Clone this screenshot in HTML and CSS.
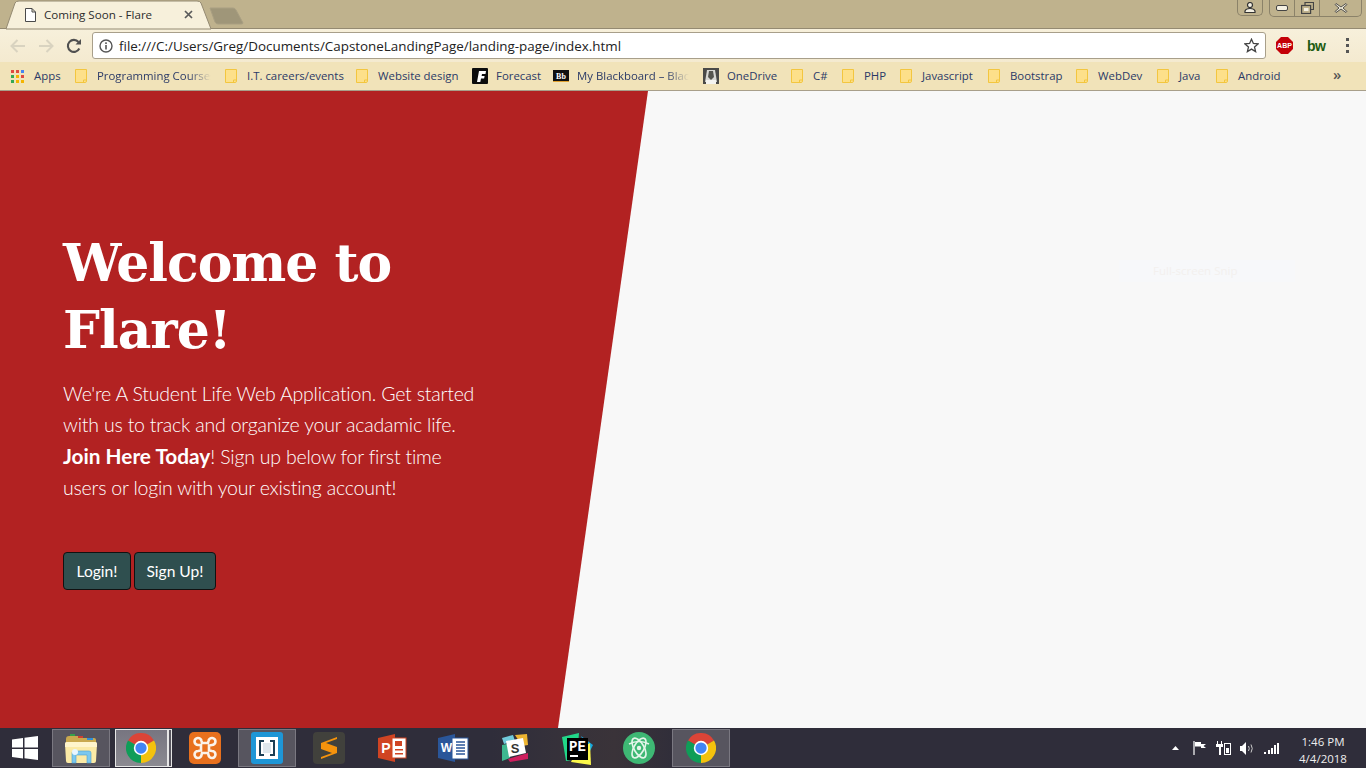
FILE: index.html
```html
<!DOCTYPE html>
<html lang="en">
<head>
<meta charset="utf-8">
<title>Coming Soon - Flare</title>
<link rel="stylesheet" href="styles.css">
</head>
<body>
<svg class="defs" width="0" height="0" aria-hidden="true">
  <defs>
    <symbol id="folder" viewBox="0 0 12 14"><path d="M.5.5h11v11.600a1.400 1.400 0 0 1-1.400 1.400H.5z" fill="#fde08a" stroke="#f3c63f"/><path d="M8.500 13.500v-2.500h3" fill="none" stroke="#f3c63f"/></symbol>
    <symbol id="chrome" viewBox="0 0 48 48">
      <path d="M24 24 3.200 12A24 24 0 0 1 44.800 12z" fill="#db4437"/>
      <path d="M24 24 44.800 12A24 24 0 0 1 24 48z" fill="#f4c20d"/>
      <path d="M24 24 24 48A24 24 0 0 1 3.200 12z" fill="#0f9d58"/>
      <circle cx="24" cy="24" r="11.500" fill="#fff"/><circle cx="24" cy="24" r="9" fill="#4285f4"/>
    </symbol>
  </defs>
</svg>
<header class="browser">
  <div class="tabstrip">
    <div class="tab">
      <svg class="tab-shape" width="206" height="29" viewBox="0 0 206 29"><path d="M6 29 15 3Q16 1 19 1H197Q200 1 201 3L211 29z" fill="#f7f0db" stroke="#948a72"/></svg>
      <svg class="tab-page" width="11" height="14" viewBox="0 0 11 14"><path d="M.5.500h6.500l3.500 3.500v9.500h-10zM7 .5v3.500h3.500" fill="#fff" stroke="#4a4a4a"/></svg>
      <span class="tab-title">Coming Soon - Flare</span>
      <svg class="tab-close" width="9" height="9" viewBox="0 0 9 9"><path d="M1 1l7 7M8 1l-7 7" stroke="#5a5a5a" stroke-width="1.700"/></svg>
    </div>
    <svg class="new-tab" width="36" height="18" viewBox="0 0 36 18"><path d="M1 1H24Q26 1 27 3L34 16Q34 17 32 17H9Q7 17 6 15z" fill="#9f9679" stroke="#a99f82"/></svg>
    <div class="win-controls">
      <div class="win-btn win-user"><svg width="12" height="11" viewBox="0 0 12 11"><circle cx="6" cy="3" r="2.500" fill="#f4f0e2" stroke="#333" stroke-width="1.200"/><path d="M1 10.500V9q1-2.500 5-2.500T11 9v1.500z" fill="#f4f0e2" stroke="#333" stroke-width="1.200"/></svg></div>
      <div class="win-group">
        <div class="win-btn win-min"><svg width="12" height="6" viewBox="0 0 12 6"><rect x=".5" y=".5" width="11" height="5" rx="1.500" fill="#f4f0e2" stroke="#444"/></svg></div>
        <div class="win-btn win-max"><svg width="13" height="12" viewBox="0 0 13 12"><path d="M4 3V.5h8.500v7H9.500" fill="none" stroke="#444" stroke-width="1.200"/><rect x=".6" y="3.500" width="9" height="8" fill="none" stroke="#444" stroke-width="1.200"/><rect x="3" y="6" width="4.500" height="3" fill="#f4f0e2"/></svg></div>
        <div class="win-btn win-close"><svg width="14" height="10" viewBox="0 0 14 10"><path d="M2 .5 7 4l5-3.500 1 1L9 5l4 3.500-1 1L7 6 2 9.500l-1-1L5 5 1 1.500z" fill="#efe9d6" stroke="#444" stroke-width=".9"/></svg></div>
      </div>
    </div>
  </div>
  <div class="toolbar">
    <svg class="tool-icon" width="16" height="14" viewBox="0 0 16 14"><path d="M15 7H2M7.500 1 1.500 7l6 6" fill="none" stroke="#d9d3c0" stroke-width="2"/></svg>
    <svg class="tool-icon" width="16" height="14" viewBox="0 0 16 14"><path d="M1 7h13M8.500 1l6 6-6 6" fill="none" stroke="#d9d3c0" stroke-width="2"/></svg>
    <svg class="tool-icon" width="16" height="16" viewBox="0 0 16 16"><path d="M13.300 10.500A6 6 0 1 1 12.500 4" fill="none" stroke="#505050" stroke-width="2.100"/><path d="M9.500 6.500H15V1z" fill="#505050"/></svg>
    <div class="omnibox">
      <svg width="14" height="14" viewBox="0 0 14 14"><circle cx="7" cy="7" r="6" fill="none" stroke="#555" stroke-width="1.400"/><rect x="6.200" y="6" width="1.600" height="4.500" fill="#555"/><rect x="6.200" y="3.300" width="1.600" height="1.700" fill="#555"/></svg>
      <span class="url">file:///C:/Users/Greg/Documents/CapstoneLandingPage/landing-page/index.html</span>
      <svg class="star" width="15" height="15" viewBox="0 0 15 15"><path d="M7.500 1.200l1.900 4.300 4.600.4-3.500 3.100 1.100 4.600-4.100-2.500-4.100 2.500 1.100-4.600L1 5.900l4.600-.4z" fill="none" stroke="#444" stroke-width="1.300"/></svg>
    </div>
    <div class="ext ext-abp"><svg width="17" height="17" viewBox="0 0 17 17"><path d="M5 0h7l5 5v7l-5 5H5l-5-5V5z" fill="#c40008"/><text x="8.500" y="11.300" class="abp-text">ABP</text></svg></div>
    <div class="ext ext-bw">bw</div>
    <div class="kebab"><i></i><i></i><i></i></div>
  </div>
  <nav class="bookmarks">
    <span class="bm"><svg class="bm-ico" width="13" height="13" viewBox="0 0 13 13"><g fill="#e04a3f"><rect width="3" height="3"/><rect x="5" width="3" height="3"/></g><rect x="10" width="3" height="3" fill="#4285f4"/><rect y="5" width="3" height="3" fill="#34a853"/><rect x="5" y="5" width="3" height="3" fill="#f4b400"/><rect x="10" y="5" width="3" height="3" fill="#e04a3f"/><rect y="10" width="3" height="3" fill="#34a853"/><rect x="5" y="10" width="3" height="3" fill="#f4b400"/><rect x="10" y="10" width="3" height="3" fill="#f4b400"/></svg><span class="bm-label w-ap">Apps</span></span>
    <span class="bm"><svg class="bm-ico folder"><use href="#folder"/></svg><span class="bm-label faded w-prog">Programming Courses</span></span>
    <span class="bm"><svg class="bm-ico folder"><use href="#folder"/></svg><span class="bm-label w-it">I.T. careers/events</span></span>
    <span class="bm"><svg class="bm-ico folder"><use href="#folder"/></svg><span class="bm-label w-web">Website design</span></span>
    <span class="bm bm-site"><svg class="bm-ico" width="16" height="16" viewBox="0 0 16 16"><rect width="16" height="16" rx="1" fill="#0c0c0c"/><path d="M5 14 7 3h7l-.5 3H10l-.4 2h3l-.5 2.500H9L8.300 14z" fill="#fff"/></svg><span class="bm-label w-fc">Forecast</span></span>
    <span class="bm bm-site"><svg class="bm-ico" width="16" height="12" viewBox="0 0 16 12"><rect width="16" height="12" fill="#111"/><rect y="11" width="16" height="1" fill="#e0a030"/><text x="8" y="9" class="bb-text">Bb</text></svg><span class="bm-label faded w-bb">My Blackboard – Blackboard</span></span>
    <span class="bm bm-site"><svg class="bm-ico" width="16" height="16" viewBox="0 0 16 16"><rect width="16" height="16" fill="#4a4a48"/><path d="M4 2h8l2 12H2z" fill="#d8d8d4"/><path d="M6 3h4l1 6-3 3-3-3z" fill="#55554f"/><rect x="3" y="12" width="10" height="4" fill="#f4f4f0"/></svg><span class="bm-label w-od">OneDrive</span></span>
    <span class="bm"><svg class="bm-ico folder"><use href="#folder"/></svg><span class="bm-label w-c">C#</span></span>
    <span class="bm"><svg class="bm-ico folder"><use href="#folder"/></svg><span class="bm-label w-php">PHP</span></span>
    <span class="bm"><svg class="bm-ico folder"><use href="#folder"/></svg><span class="bm-label w-js">Javascript</span></span>
    <span class="bm"><svg class="bm-ico folder"><use href="#folder"/></svg><span class="bm-label w-bs">Bootstrap</span></span>
    <span class="bm"><svg class="bm-ico folder"><use href="#folder"/></svg><span class="bm-label w-wd">WebDev</span></span>
    <span class="bm"><svg class="bm-ico folder"><use href="#folder"/></svg><span class="bm-label w-ja">Java</span></span>
    <span class="bm"><svg class="bm-ico folder"><use href="#folder"/></svg><span class="bm-label w-an">Android</span></span>
    <span class="bm-more">»</span>
  </nav>
</header>
<main class="page">
  <section class="hero">
    <div class="hero-inner">
      <h1>Welcome to Flare!</h1>
      <p>We're A Student Life Web Application. Get started with us to track and organize your acadamic life. <strong>Join Here Today</strong>! Sign up below for first time users or login with your existing account!</p>
      <div class="actions">
        <button class="btn btn-login">Login!</button>
        <button class="btn btn-signup">Sign Up!</button>
      </div>
    </div>
  </section>
  <div class="ghost-snip"><span>Full-screen Snip</span></div>
</main>
<footer class="taskbar">
  <svg class="start" width="26" height="24" viewBox="0 0 26 24"><path d="M0 3.500 11 2v9.500H0zM12.500 1.800 26 0v11.500H12.500zM0 13h11v9.500L0 21zM12.500 13H26v11l-13.500-1.800z" fill="#fff"/></svg>
  <div class="slot"><div class="tb-box">
    <svg width="34" height="32" viewBox="0 0 34 32"><path d="M2 7q0-3 3-3h9l2 2h14q2 0 2 2v6H2z" fill="#c9a94f"/><rect x="6" y="2" width="5" height="2" fill="#35a04a"/><rect x="14" y="4" width="5" height="2" fill="#d04030"/><rect x="23" y="6" width="6" height="2" fill="#2e8fd8"/><path d="M1 12q0-2 2-2h28q2 0 2 2l-1 17q0 2-2 2H4q-2 0-2-2z" fill="#fbeaa6"/><path d="M1 12q0-2 2-2h28q2 0 2 2v3H1z" fill="#fff5cc"/><path d="M8 31V21q0-2 2-2h15q2 0 2 2v10h-4v-8H12v8z" fill="#7cc8ee" stroke="#4a9fd0" stroke-width=".6"/><circle cx="11" cy="20" r="3" fill="#e8f6ff"/></svg>
  </div></div>
  <div class="slot slot-active"><div class="tb-box tb-box-active"><svg width="30" height="30"><use href="#chrome"/></svg></div><i class="sliver"></i></div>
  <div class="slot"><svg width="32" height="32" viewBox="0 0 32 32"><rect width="32" height="32" rx="5" fill="#e8701d"/><path d="M12 13 9 13a3.500 3.500 0 1 1 3.500-4l.5 2h6l.5-2A3.500 3.500 0 1 1 23 13l-3 .5v5l3 .5a3.500 3.500 0 1 1-3.500 4l-.5-2h-6l-.5 2A3.500 3.500 0 1 1 9 19l3-.5z" fill="none" stroke="#fbf3ea" stroke-width="2.600"/></svg></div>
  <div class="slot"><div class="tb-box"><svg width="32" height="32" viewBox="0 0 32 32"><rect width="32" height="32" rx="3" fill="#1e96d6"/><path d="M5 5h22v22H5z" fill="#fff"/><path d="M8 8h5v2h-3v12h3v2H8zM24 8h-5v2h3v12h-3v2h5z" fill="#1c3f55"/><rect x="12" y="11" width="8" height="10" fill="#dfe7ec"/></svg></div></div>
  <div class="slot"><svg width="32" height="32" viewBox="0 0 32 32"><rect width="32" height="32" rx="4" fill="#41413c"/><path d="M24 5 8 11v6l11 4-11 4v2l16-6v-6l-11-4 11-4z" fill="#f5930c"/></svg></div>
  <div class="slot"><svg width="32" height="32" viewBox="0 0 32 32"><path d="M3 6 20 2v28L3 26z" fill="#d04423"/><rect x="17" y="6" width="14" height="20" fill="#fff" stroke="#d04423"/><rect x="20" y="9" width="7" height="5" fill="#d04423"/><rect x="20" y="17" width="8" height="1.500" fill="#d04423"/><rect x="20" y="21" width="8" height="1.500" fill="#d04423"/><text x="11" y="21" class="ms-text">P</text></svg></div>
  <div class="slot"><svg width="32" height="32" viewBox="0 0 32 32"><path d="M1 6 18 2v28L1 26z" fill="#2a5699"/><rect x="15" y="6" width="16" height="21" fill="#fff" stroke="#2a5699"/><path d="M19 10h9M19 13h9M19 16h9M19 19h9M19 22h9" stroke="#2a5699" stroke-width="1.500"/><text x="9.500" y="20" class="ms-text ms-w">W</text></svg></div>
  <div class="slot"><svg width="30" height="30" viewBox="0 0 30 30"><path d="M2 5 13 2l2 6-11 3z" fill="#70cadb"/><path d="M15 2 27 1l1 11-6 1z" fill="#edb431"/><path d="M2 12l5-1 3 14-8 3z" fill="#3eb890"/><path d="M8 26l20-6v6L10 29z" fill="#cf1f5e"/><path d="M6 8 23 5l3 15-17 4z" fill="#fff"/><text x="15" y="20" class="slack-text">S</text></svg></div>
  <div class="slot"><svg width="36" height="36" viewBox="0 0 36 36"><path d="M3 7 20 3l-2 26-11 2z" fill="#21d789"/><path d="M22 6l12 9-4 8z" fill="#12a8e0"/><path d="M12 32l20 3-1-22-14 8z" fill="#fcf84a"/><rect x="8" y="8" width="21" height="22" fill="#000"/><text x="18.500" y="21" class="pe-text">PE</text><rect x="11" y="25" width="8" height="2" fill="#fff"/></svg></div>
  <div class="slot"><svg width="32" height="32" viewBox="0 0 32 32"><circle cx="16" cy="16" r="16" fill="#3eb874"/><g fill="none" stroke="#e4f5ea" stroke-width="1.600"><ellipse cx="16" cy="16" rx="11" ry="5" transform="rotate(60 16 16)"/><ellipse cx="16" cy="16" rx="11" ry="5" transform="rotate(-60 16 16)"/><path d="M6 12q10-5 20 0"/></g><circle cx="16" cy="16" r="2.200" fill="#e4f5ea"/></svg></div>
  <div class="slot"><div class="tb-box"><svg width="30" height="30"><use href="#chrome"/></svg></div></div>
  <div class="tray">
    <svg width="7" height="4" viewBox="0 0 7 4" class="tray-up"><path d="M3.500 0 7 4H0z" fill="#fff"/></svg>
    <svg width="14" height="14" viewBox="0 0 14 14"><path d="M1 0v14" stroke="#fff" stroke-width="1.200"/><path d="M2 1h6v2h5L10.500 5 13 7H8V5.500H2z" fill="#fff"/></svg>
    <svg width="15" height="14" viewBox="0 0 15 14"><path d="M0 3h7v3H5v8H3V6H0z" fill="#fff"/><rect x="1" y="0" width="1" height="3" fill="#fff"/><rect x="5" y="0" width="1" height="3" fill="#fff"/><rect x="8.500" y="2.500" width="6" height="11" fill="none" stroke="#fff"/><rect x="10" y="7" width="3" height="5" fill="#fff"/></svg>
    <svg width="15" height="13" viewBox="0 0 15 13"><path d="M0 4h2l4-4v13L2 9H0z" fill="#fff"/><path d="M8.500 4q1.500 2.500 0 5M11 2.500q2.500 4 0 8" fill="none" stroke="#ccc"/></svg>
    <svg width="16" height="11" viewBox="0 0 16 11"><rect y="9" width="2" height="2" fill="#fff"/><rect x="4" y="7" width="2" height="4" fill="#fff"/><rect x="7" y="5" width="2" height="6" fill="#fff"/><rect x="10" y="2" width="2" height="9" fill="#fff"/><rect x="13" width="2" height="11" fill="#fff"/></svg>
  </div>
  <div class="clock"><span>1:46 PM</span><span>4/4/2018</span></div>
</footer>
</body>
</html>
```

FILE: styles.css
```css
* { box-sizing: border-box; }
html, body { margin: 0; height: 100%; }
body {
  width: 1366px;
  height: 768px;
  overflow: hidden;
  display: flex;
  flex-direction: column;
  font-family: "Open Sans", "Liberation Sans", sans-serif;
  background: #f8f8f8;
}
.defs { position: absolute; }

.browser { flex: none; height: 91px; display: flex; flex-direction: column; }

.tabstrip {
  position: relative;
  height: 29px;
  flex: none;
  background: #bfb28d;
  border-bottom: 1px solid #948a72;
  display: flex;
  align-items: flex-start;
}
.tab {
  position: relative;
  width: 206px;
  height: 29px;
  display: flex;
  align-items: center;
  padding: 0 0 0 25px;
  z-index: 1;
}
.tab-shape { position: absolute; left: 0; top: 0; overflow: visible; }
.tab-page, .tab-title, .tab-close { position: relative; }
.tab-title { margin-left: 8px; font-size: 11.600px; color: #2d2d2d; width: 140px; white-space: nowrap; }
.new-tab { margin: 7px 0 0 3px; }
.win-controls { margin-left: auto; display: flex; gap: 6px; padding-right: 4px; align-items: flex-start; }
.win-btn { height: 16px; display: flex; align-items: center; justify-content: center; }
.win-user { width: 26px; border: 1px solid #8b8269; border-top: 0; border-radius: 0 0 5px 5px; }
.win-group { display: flex; border: 1px solid #8b8269; border-top: 0; border-radius: 0 0 5px 5px; }
.win-min { width: 25px; border-right: 1px solid #8b8269; }
.win-max { width: 25px; border-right: 1px solid #8b8269; }
.win-close { width: 41px; }

.toolbar {
  height: 33px;
  flex: none;
  display: flex;
  align-items: center;
  background: linear-gradient(#f7f0db, #f4ead0);
  padding-left: 10px;
}
.tool-icon { margin-right: 12px; }
.toolbar .tool-icon:nth-child(3) { margin-left: 0; margin-right: 10px; }
.omnibox {
  width: 1174px;
  height: 27px;
  background: #fff;
  border: 1px solid #a89f8a;
  border-radius: 3px;
  display: flex;
  align-items: center;
  padding: 0 6px 0 6px;
  gap: 6px;
}
.url { font-size: 13.400px; color: #222; white-space: nowrap; flex: 1; }
.ext-abp { width: 17px; height: 17px; margin-left: 10px; }
.abp-text { font: bold 7px "Liberation Sans", sans-serif; fill: #fff; text-anchor: middle; }
.ext-bw { font: 900 14px/14px "Liberation Sans", sans-serif; color: #1d5c12; width: 18px; margin-left: 14px; letter-spacing: -.5px; }
.kebab { display: flex; flex-direction: column; gap: 3px; margin-left: 21px; }
.kebab i { width: 3px; height: 3px; background: #555; display: block; }

.bookmarks {
  height: 29px;
  flex: none;
  background: #f1e3b9;
  border-bottom: 1px solid #a89f8a;
  display: flex;
  align-items: center;
  padding-left: 11px;
  gap: 14px;
  font-size: 11.400px;
  color: #2b3a67;
}
.bm { display: flex; align-items: center; gap: 10px; white-space: nowrap; flex: none; }
.bm-site { gap: 8px; }
.bm-ico { flex: none; display: block; }
.bm-ico.folder { width: 12px; height: 14px; }
.bm-label { display: block; margin-top: -2px; }
.bb-text { font: bold 8px "Liberation Serif", serif; fill: #fff; text-anchor: middle; }
.faded {
  overflow: hidden;
  -webkit-mask-image: linear-gradient(90deg, #000 80%, transparent);
  mask-image: linear-gradient(90deg, #000 80%, transparent);
}
.w-ap { width: 27px; }
.w-prog { width: 114px; }
.w-it { width: 95px; }
.w-web { width: 80px; }
.w-fc { width: 43px; }
.w-bb { width: 112px; }
.w-od { width: 50px; }
.w-c { width: 15px; }
.w-php { width: 22px; }
.w-js { width: 52px; }
.w-bs { width: 52px; }
.w-wd { width: 45px; }
.w-ja { width: 23px; }
.w-an { width: 43px; }
.bm-more { margin-left: 38px; margin-top: -3px; font-size: 15px; color: #555; font-weight: 600; line-height: 1; }

.page {
  position: relative;
  flex: 1;
  min-height: 0;
  background: #f8f8f8;
}
.hero {
  width: 648px;
  height: 100%;
  background: #b22222;
  clip-path: polygon(0 0, 100% 0, 558px 100%, 0 100%);
  display: flex;
  align-items: center;
  padding-left: 63px;
}
.hero-inner { width: 424px; }
h1 {
  margin: 0 0 15px;
  font: 700 52px/67px "DejaVu Serif", "Liberation Serif", serif;
  letter-spacing: -1px;
  color: #fff;
}
p {
  margin: 0 0 49px;
  font: 300 19.500px/31px "Lato", "Open Sans", sans-serif;
  letter-spacing: -.2px;
  color: #fff;
}
p strong { font-weight: 700; font-size: 20.800px; letter-spacing: 0; }
.actions { display: flex; gap: 3px; }
.btn {
  height: 38px;
  padding: 0;
  background: #2f4f4f;
  border: 1px solid #111;
  border-radius: 4px;
  color: #fff;
  font: 400 15.600px "Lato", sans-serif;
}
.btn-login { width: 68px; }
.btn-signup { width: 82px; }
.ghost-snip {
  position: absolute;
  left: 1119px;
  top: 169px;
  width: 176px;
  height: 22px;
  padding-left: 34px;
  background: #f7f8fa;
  font-size: 11.500px;
  line-height: 22px;
  color: #f3f0ee;
}

.taskbar {
  flex: none;
  height: 40px;
  background: linear-gradient(90deg, #2f2d3a 0 36%, #37323a 42%, #3a3339 45%, #2f2d3a 50%);
  display: flex;
  align-items: center;
  position: relative;
}
.start { margin: 0 12px; flex: none; }
.slot {
  position: relative;
  width: 62px;
  height: 40px;
  flex: none;
  display: flex;
  align-items: center;
  justify-content: center;
}
.tb-box {
  width: 58px;
  height: 38px;
  background: #57555f;
  border: 1px solid #7a7881;
  display: flex;
  align-items: center;
  justify-content: center;
}
.tb-box-active {
  width: 53px;
  margin-right: 4px;
  background: linear-gradient(#777580, #8b8a91);
  border-color: #e6e6e6;
}
.sliver {
  position: absolute;
  right: 2px;
  top: 1px;
  width: 4px;
  height: 38px;
  background: #57555f;
  border: 1px solid #e6e6e6;
}
.ms-text { font: bold 14px "Liberation Sans", sans-serif; fill: #fff; text-anchor: middle; }
.ms-w { font-size: 12px; }
.slack-text { font: bold 13px "Liberation Sans", sans-serif; fill: #333; text-anchor: middle; }
.pe-text { font: bold 14px "Liberation Mono", monospace; fill: #fff; text-anchor: middle; }
.tray {
  display: flex;
  align-items: center;
  gap: 9px;
  margin-left: 440px;
  flex: none;
}
.tray-up { margin-right: 5px; }
.clock {
  margin-left: 19px;
  width: 48px;
  padding-top: 3px;
  display: flex;
  flex-direction: column;
  align-items: center;
  font-size: 11.500px;
  line-height: 17px;
  color: #eee;
  white-space: nowrap;
}
```
